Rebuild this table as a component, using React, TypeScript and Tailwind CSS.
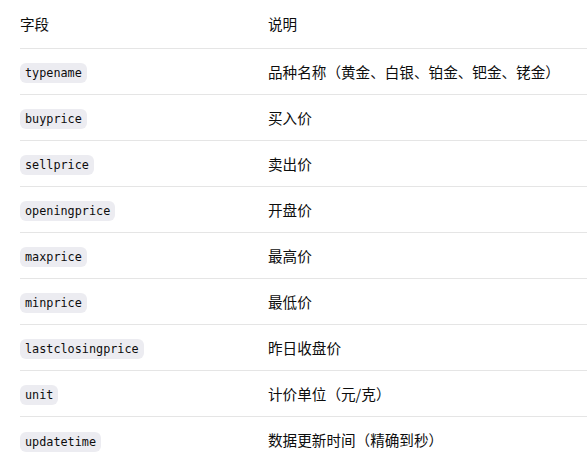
const rows: { field: string; desc: string }[] = [
  { field: "typename", desc: "品种名称（黄金、白银、铂金、钯金、铑金）" },
  { field: "buyprice", desc: "买入价" },
  { field: "sellprice", desc: "卖出价" },
  { field: "openingprice", desc: "开盘价" },
  { field: "maxprice", desc: "最高价" },
  { field: "minprice", desc: "最低价" },
  { field: "lastclosingprice", desc: "昨日收盘价" },
  { field: "unit", desc: "计价单位（元/克）" },
  { field: "updatetime", desc: "数据更新时间（精确到秒）" },
];

export default function App() {
  return (
    <div className="min-h-screen w-[587px] overflow-hidden bg-white pl-5 font-['Noto_Sans_CJK_SC',sans-serif] text-[14.6px] text-[#0d0d0d]">
      <div className="w-[640px]">
        <div className="grid h-[49px] grid-cols-[248px_1fr] items-center border-b border-[#e5e5e5] pb-px">
          <div>字段</div>
          <div>说明</div>
        </div>
        {rows.map((r, i) => (
          <div
            key={r.field}
            className={`grid h-[46px] grid-cols-[248px_1fr] items-center ${
              i < rows.length - 1 ? "border-b border-[#e5e5e5]" : ""
            }`}
          >
            <div>
              <code className="rounded-md bg-[#ececf1] px-[5px] py-[3px] font-['DejaVu_Sans_Mono',monospace] text-[11.8px] text-[#0d0d0d]">
                {r.field}
              </code>
            </div>
            <div>{r.desc}</div>
          </div>
        ))}
      </div>
    </div>
  );
}
